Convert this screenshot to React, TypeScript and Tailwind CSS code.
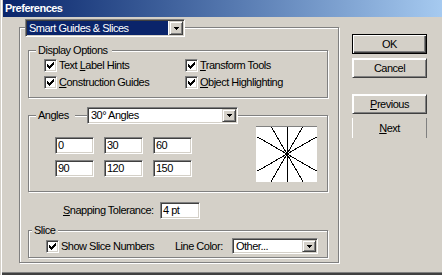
import React from "react";

const raised =
  "border border-t-[#d4d0c8] border-l-[#d4d0c8] border-b-[#404040] border-r-[#404040] shadow-[inset_1px_1px_0_#fff,inset_-1px_-1px_0_#808080]";
const sunken =
  "border border-t-[#808080] border-l-[#808080] border-b-white border-r-white shadow-[inset_1px_1px_0_#404040,inset_-1px_-1px_0_#d4d0c8]";
const etched = "border border-[#808080] shadow-[inset_1px_1px_0_#fff,1px_1px_0_#fff]";

function Arrow() {
  return (
    <svg width="5" height="3" viewBox="0 0 5 3" shapeRendering="crispEdges">
      <path d="M0 0h5v1h-1v1h-1v1h-1v-1h-1v-1h-1z" fill="#000" />
    </svg>
  );
}

function ArrowButton() {
  return (
    <div className={`w-[14px] shrink-0 self-stretch flex items-center justify-center bg-[#d4d0c8] ${raised}`}>
      <Arrow />
    </div>
  );
}

function Check() {
  return (
    <span className={`w-[13px] h-[13px] shrink-0 bg-white flex items-center justify-center ${sunken}`}>
      <svg width="7" height="7" viewBox="0 0 7 7" shapeRendering="crispEdges">
        <path
          d="M6 0h1v1h-1zM5 1h2v1h-2zM0 2h1v1h-1zM4 2h3v1h-3zM0 3h2v1h-2zM3 3h3v1h-3zM0 4h5v1h-5zM1 5h3v1h-3zM2 6h1v1h-1z"
          fill="#000"
        />
      </svg>
    </span>
  );
}

function CheckItem({ children }: { children: React.ReactNode }) {
  return (
    <div className="flex items-center gap-[2px] h-[13px] whitespace-nowrap">
      <Check />
      <span>{children}</span>
    </div>
  );
}

function Field({ value }: { value: string }) {
  return (
    <div className={`h-[17px] bg-white pl-[2px] flex items-center whitespace-nowrap ${sunken}`}>{value}</div>
  );
}

function Preview() {
  const lines = [
    [1.6, 44, 60.4, 10],
    [14, -2.4, 48, 56.4],
    [31, 0, 31, 56],
    [14, 56.4, 48, -2.4],
    [1.6, 10, 60.4, 44],
  ];
  return (
    <div className="w-[61px] h-[56px] bg-white border-t border-t-[#808080]">
      <svg width="61" height="55" viewBox="0 0 61 55" shapeRendering="crispEdges">
        {lines.map(([x1, y1, x2, y2], i) => (
          <line key={i} x1={x1} y1={y1} x2={x2} y2={y2} stroke="#000" strokeWidth="1" />
        ))}
      </svg>
    </div>
  );
}

function Button({ children, primary, open }: { children: React.ReactNode; primary?: boolean; open?: boolean }) {
  let frame = `${raised} border-t-white border-l-white`;
  if (primary) frame = "border border-black shadow-[inset_1px_1px_0_#fff,inset_-1px_-1px_0_#404040,inset_-2px_-2px_0_#808080]";
  if (open) frame = "border-l border-r border-l-white border-r-[#808080]";
  return (
    <div className={`h-[20px] flex items-center justify-center bg-[#d4d0c8] ${frame}`}>{children}</div>
  );
}

export default function App() {
  return (
    <div className="w-[442px] h-[275px] overflow-hidden bg-[#d4d0c8] pl-[3px] flex flex-col font-['Liberation_Sans',Arial,sans-serif] text-[11px] tracking-[-0.5px] leading-[13px] text-black shadow-[inset_1px_0_0_#d4d0c8,inset_2px_0_0_#fff,inset_0_-2px_0_#404040,inset_0_-3px_0_#808080]">
      <div className="h-[17px] shrink-0 bg-linear-to-r from-[#0a246a] to-[#a6caf0] flex items-center pl-[2px] text-white font-bold">
        Preferences
      </div>

      <div className="flex pl-[16px] pt-[10px]">
        {/* main panel */}
        <div className={`w-[320px] h-[236px] flex flex-col ${etched}`}>
          <div className={`-mt-[9px] ml-[5px] w-[160px] h-[18px] flex bg-white p-[1px] ${sunken}`}>
            <div className="flex-1 bg-[#0a246a] text-white pl-[2px] flex items-center mr-[1px] whitespace-nowrap">
              Smart Guides &amp; Slices
            </div>
            <ArrowButton />
          </div>

          {/* display options */}
          <div className={`mt-[13px] ml-[8px] w-[300px] h-[48px] ${etched}`}>
            <div className="-mt-[7px] ml-[7px] w-fit bg-[#d4d0c8] pl-[2px] pr-[4px]">Display Options</div>
            <div className="mt-[2px] pl-[15px] grid grid-cols-[141px_auto] gap-y-[4px]">
              <CheckItem>
                Text <u>L</u>abel Hints
              </CheckItem>
              <CheckItem>
                <u>T</u>ransform Tools
              </CheckItem>
              <CheckItem>
                <u>C</u>onstruction Guides
              </CheckItem>
              <CheckItem>
                <u>O</u>bject Highlighting
              </CheckItem>
            </div>
          </div>

          {/* angles */}
          <div className={`mt-[17px] ml-[8px] w-[300px] h-[77px] ${etched}`}>
            <div className="-mt-[9px] h-[17px] flex items-center">
              <span className="ml-[7px] w-[39px] pl-[2px] bg-[#d4d0c8] leading-[17px]">Angles</span>
              <div className={`ml-[12px] w-[151px] h-[17px] flex bg-white p-[1px] ${sunken}`}>
                <div className="flex-1 pl-[2px] flex items-center whitespace-nowrap">30° Angles</div>
                <ArrowButton />
              </div>
            </div>
            <div className="flex items-start">
              <div className="ml-[26px] mt-[13px] grid grid-cols-[39px_39px_39px] gap-x-[10px] gap-y-[6px]">
                {["0", "30", "60", "90", "120", "150"].map((v) => (
                  <Field key={v} value={v} />
                ))}
              </div>
              <div className="ml-auto mr-[10px] mt-[2px]">
                <Preview />
              </div>
            </div>
          </div>

          {/* snapping */}
          <div className="mt-[10px] h-[17px] flex items-center pl-[43px] gap-[5px]">
            <span className="w-[92px] whitespace-nowrap">
              <u>S</u>napping Tolerance:
            </span>
            <div className="w-[40px]">
              <Field value="4 pt" />
            </div>
          </div>

          {/* slice */}
          <div className={`mt-[11px] ml-[8px] w-[300px] h-[28px] ${etched}`}>
            <div className="-mt-[7px] ml-[3px] w-fit bg-[#d4d0c8] pl-[2px] pr-[3px]">Slice</div>
            <div className="mt-[1px] h-[16px] flex items-center pl-[17px]">
              <div className="w-[129px] flex items-center gap-[2px] whitespace-nowrap">
                <Check />
                <span>Show Slice Numbers</span>
              </div>
              <span className="w-[57px] whitespace-nowrap">Line Color:</span>
              <div className={`w-[86px] h-[16px] flex bg-white p-[1px] ${sunken}`}>
                <div className="flex-1 pl-[2px] flex items-center whitespace-nowrap">Other...</div>
                <ArrowButton />
              </div>
            </div>
          </div>
        </div>

        {/* buttons */}
        <div className="ml-[13px] mt-[7px] w-[75px] flex flex-col">
          <Button primary>OK</Button>
          <div className="mt-[4px]">
            <Button>Cancel</Button>
          </div>
          <div className="mt-[16px]">
            <Button>
              <span>
                <u>P</u>revious
              </span>
            </Button>
          </div>
          <div className="mt-[4px]">
            <Button open>
              <span>
                <u>N</u>ext
              </span>
            </Button>
          </div>
        </div>
      </div>
    </div>
  );
}
